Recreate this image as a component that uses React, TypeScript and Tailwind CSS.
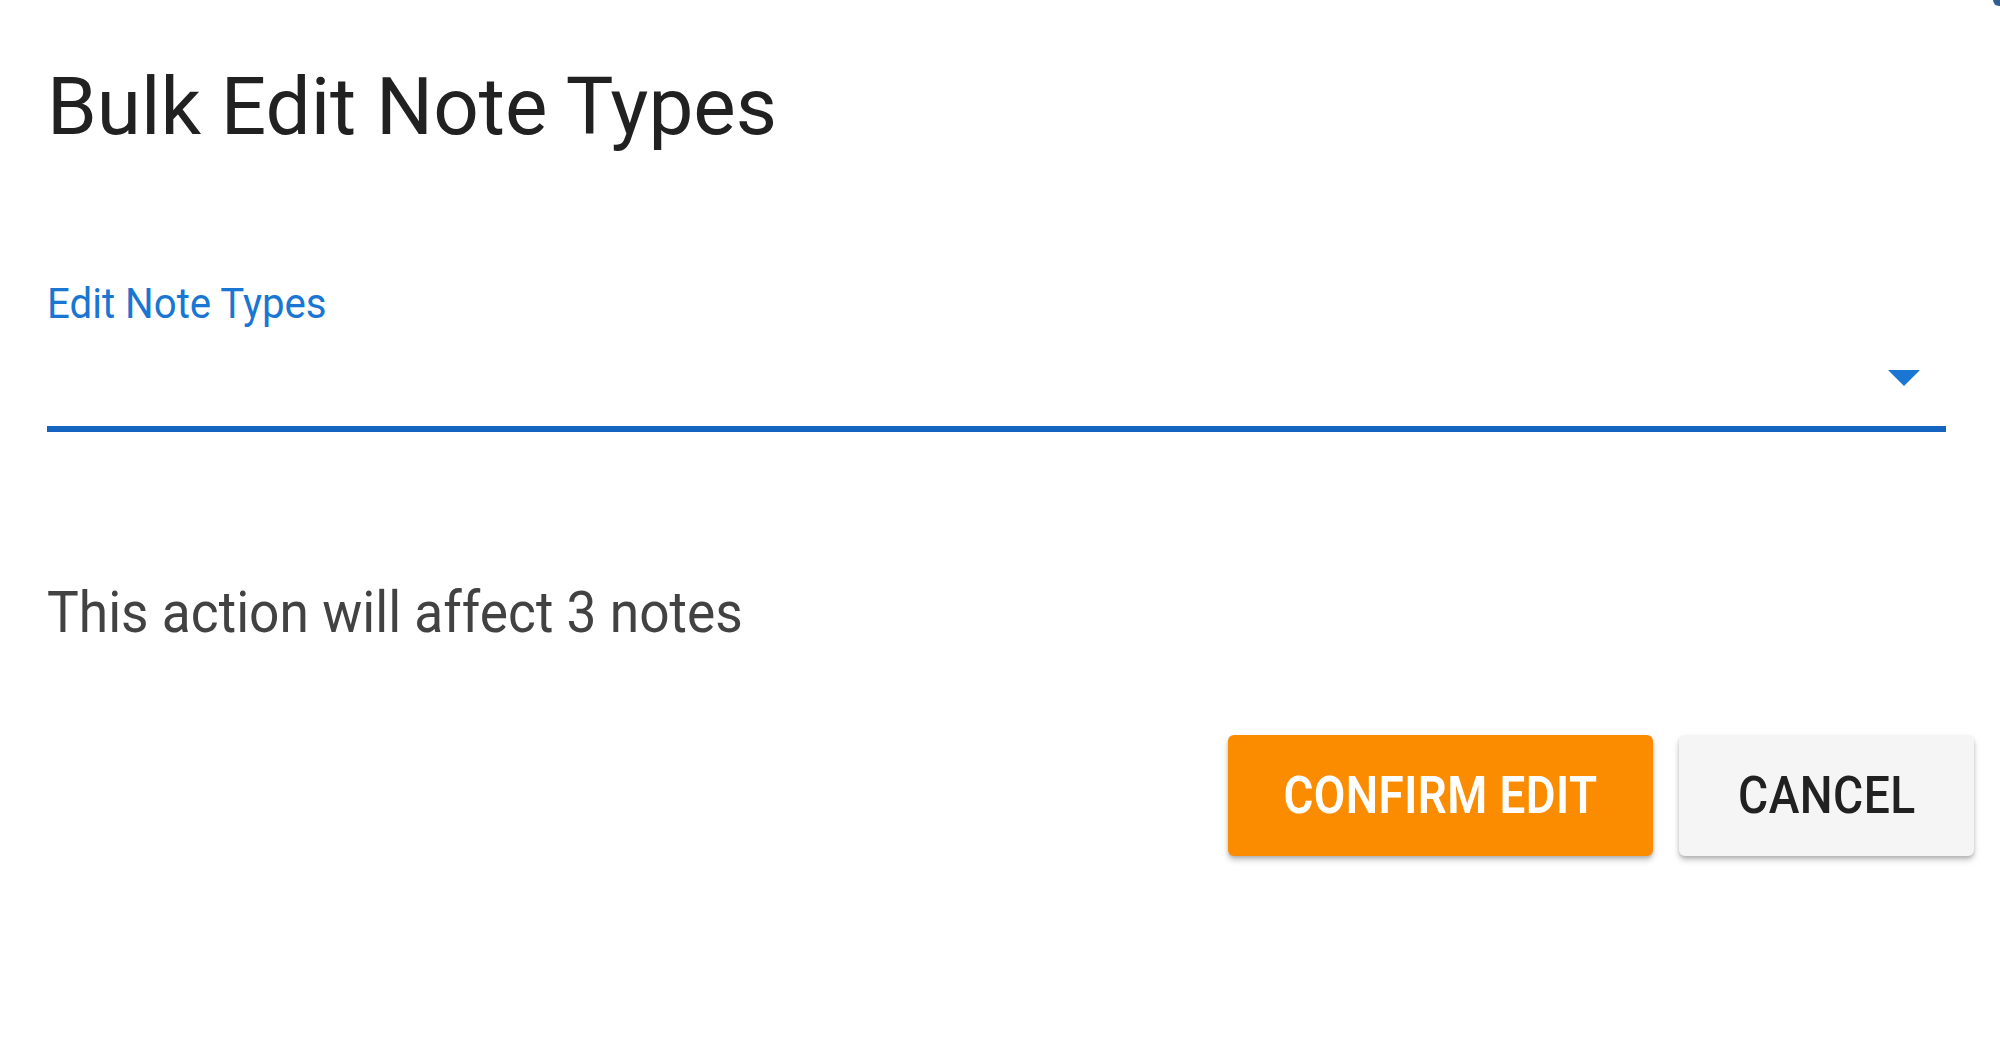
import React from "react";

const font = { fontFamily: "Roboto, 'Liberation Sans', sans-serif" };

export default function App() {
  return (
    <div
      className="relative w-full h-[1047px] bg-white pl-[47px] pr-[26px] overflow-hidden"
      style={font}
    >
      {/* stray corner from the window behind */}
      <div className="absolute top-0 right-0 w-[7px] h-[6px] rounded-bl-full bg-[#2d5f96]" />

      <h1 className="pt-[67px] text-[80px] leading-[80px] font-normal text-[#212121]">
        Bulk Edit Note Types
      </h1>

      {/* Select field */}
      <div className="mt-[135px] mr-[28px]">
        <label className="block text-[43px] leading-[43px] text-[#1976d2]">
          <span className="inline-block origin-left scale-x-[0.935]">Edit Note Types</span>
        </label>
        <div className="h-[107px] flex items-start justify-end border-b-[6px] border-[#1565c0]">
          <svg
            className="mt-[45px] mr-[26px]"
            width="32"
            height="16"
            viewBox="0 0 32 16"
          >
            <path d="M0 0 L32 0 L16 16 Z" fill="#1976d2" />
          </svg>
        </div>
      </div>

      <p className="mt-[152px] text-[57px] leading-[57px] text-[#424242]">
        <span className="inline-block origin-left scale-x-[0.935]">
          This action will affect 3 notes
        </span>
      </p>

      {/* Actions */}
      <div className="mt-[94px] flex justify-end gap-[26px]">
        <button className="w-[425px] h-[121px] rounded-[6px] bg-[#fb8c00] text-white text-[52px] font-semibold uppercase tracking-[0.5px] shadow-[0_4px_6px_rgba(0,0,0,0.22),0_2px_3px_rgba(0,0,0,0.12)]">
          <span className="inline-block scale-x-[0.88]">Confirm Edit</span>
        </button>
        <button className="w-[295px] h-[121px] rounded-[6px] bg-[#f5f5f5] text-[#212121] text-[52px] font-medium uppercase tracking-[0.5px] shadow-[0_4px_6px_rgba(0,0,0,0.22),0_2px_3px_rgba(0,0,0,0.12)]">
          <span className="inline-block scale-x-[0.89]">Cancel</span>
        </button>
      </div>
    </div>
  );
}
